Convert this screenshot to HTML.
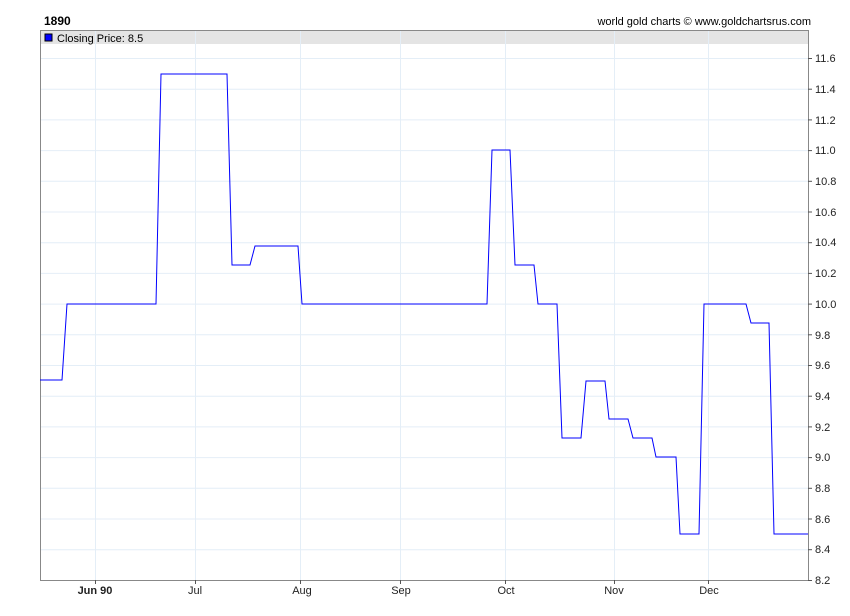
<!DOCTYPE html>
<html><head><style>body{margin:0;background:#fff}svg{display:block}</style></head><body>
<svg width="850" height="616" xmlns="http://www.w3.org/2000/svg" font-family="Liberation Sans, sans-serif">
<rect width="850" height="616" fill="#fff"/>
<text x="44" y="25" font-size="12" font-weight="bold" fill="#000">1890</text>
<text x="811" y="25" font-size="11" text-anchor="end" fill="#000">world gold charts © www.goldchartsrus.com</text>
<rect x="40" y="30" width="768" height="14" fill="#e4e4e4"/>
<g stroke="#e4eef7" stroke-width="1">
<line x1="95.5" y1="30" x2="95.5" y2="580"/><line x1="195.5" y1="30" x2="195.5" y2="580"/>
<line x1="300.5" y1="30" x2="300.5" y2="580"/><line x1="400.5" y1="30" x2="400.5" y2="580"/>
<line x1="505.5" y1="30" x2="505.5" y2="580"/><line x1="614.5" y1="30" x2="614.5" y2="580"/>
<line x1="708.5" y1="30" x2="708.5" y2="580"/>
<g id="h"></g>
</g>
<g stroke="#e4eef7">
<line x1="40" x2="808" y1="58.5" y2="58.5"/><line x1="40" x2="808" y1="89.2" y2="89.2"/><line x1="40" x2="808" y1="119.9" y2="119.9"/><line x1="40" x2="808" y1="150.6" y2="150.6"/><line x1="40" x2="808" y1="181.3" y2="181.3"/><line x1="40" x2="808" y1="212" y2="212"/><line x1="40" x2="808" y1="242.7" y2="242.7"/><line x1="40" x2="808" y1="273.4" y2="273.4"/><line x1="40" x2="808" y1="304.1" y2="304.1"/><line x1="40" x2="808" y1="334.8" y2="334.8"/><line x1="40" x2="808" y1="365.5" y2="365.5"/><line x1="40" x2="808" y1="396.2" y2="396.2"/><line x1="40" x2="808" y1="426.9" y2="426.9"/><line x1="40" x2="808" y1="457.6" y2="457.6"/><line x1="40" x2="808" y1="488.3" y2="488.3"/><line x1="40" x2="808" y1="519" y2="519"/><line x1="40" x2="808" y1="549.7" y2="549.7"/>
</g>
<rect x="40.5" y="30.5" width="768" height="550" fill="none" stroke="#888"/>
<rect x="45" y="34" width="7" height="7" fill="#00f" stroke="#000" stroke-width="1"/>
<text x="57" y="42" font-size="11" fill="#000">Closing Price: 8.5</text>
<polyline fill="none" stroke="#0000ff" stroke-width="1" points="40,380 62,380 67,304 156,304 161,74 227,74 232,265 250,265 255,246 298,246 302,304 487,304 492,150 510,150 515,265 534,265 538,304 557,304 562,438 581,438 586,381 605,381 609,419 628,419 633,438 652,438 656,457 676,457 680,534 699,534 704,304 746,304 751,323 769,323 774,534 808,534"/>
<g stroke="#555">
<line x1="808" x2="812" y1="58.5" y2="58.5"/><line x1="808" x2="812" y1="89.2" y2="89.2"/><line x1="808" x2="812" y1="119.9" y2="119.9"/><line x1="808" x2="812" y1="150.6" y2="150.6"/><line x1="808" x2="812" y1="181.3" y2="181.3"/><line x1="808" x2="812" y1="212" y2="212"/><line x1="808" x2="812" y1="242.7" y2="242.7"/><line x1="808" x2="812" y1="273.4" y2="273.4"/><line x1="808" x2="812" y1="304.1" y2="304.1"/><line x1="808" x2="812" y1="334.8" y2="334.8"/><line x1="808" x2="812" y1="365.5" y2="365.5"/><line x1="808" x2="812" y1="396.2" y2="396.2"/><line x1="808" x2="812" y1="426.9" y2="426.9"/><line x1="808" x2="812" y1="457.6" y2="457.6"/><line x1="808" x2="812" y1="488.3" y2="488.3"/><line x1="808" x2="812" y1="519" y2="519"/><line x1="808" x2="812" y1="549.7" y2="549.7"/><line x1="808" x2="812" y1="580.5" y2="580.5"/>
<line x1="95.5" x2="95.5" y1="580" y2="584"/><line x1="195.5" x2="195.5" y1="580" y2="584"/><line x1="300.5" x2="300.5" y1="580" y2="584"/><line x1="400.5" x2="400.5" y1="580" y2="584"/><line x1="505.5" x2="505.5" y1="580" y2="584"/><line x1="614.5" x2="614.5" y1="580" y2="584"/><line x1="708.5" x2="708.5" y1="580" y2="584"/>
</g>
<g font-size="11" fill="#222">
<text x="815" y="62">11.6</text><text x="815" y="93">11.4</text><text x="815" y="124">11.2</text><text x="815" y="154">11.0</text><text x="815" y="185">10.8</text><text x="815" y="216">10.6</text><text x="815" y="246">10.4</text><text x="815" y="277">10.2</text><text x="815" y="308">10.0</text><text x="815" y="339">9.8</text><text x="815" y="369">9.6</text><text x="815" y="400">9.4</text><text x="815" y="431">9.2</text><text x="815" y="461">9.0</text><text x="815" y="492">8.8</text><text x="815" y="523">8.6</text><text x="815" y="553">8.4</text><text x="815" y="584">8.2</text>
</g>
<g font-size="11" fill="#222" text-anchor="middle">
<text x="95" y="594" font-weight="bold">Jun 90</text><text x="195" y="594">Jul</text><text x="302" y="594">Aug</text><text x="401" y="594">Sep</text><text x="506" y="594">Oct</text><text x="614" y="594">Nov</text><text x="709" y="594">Dec</text>
</g>
</svg>
</body></html>
